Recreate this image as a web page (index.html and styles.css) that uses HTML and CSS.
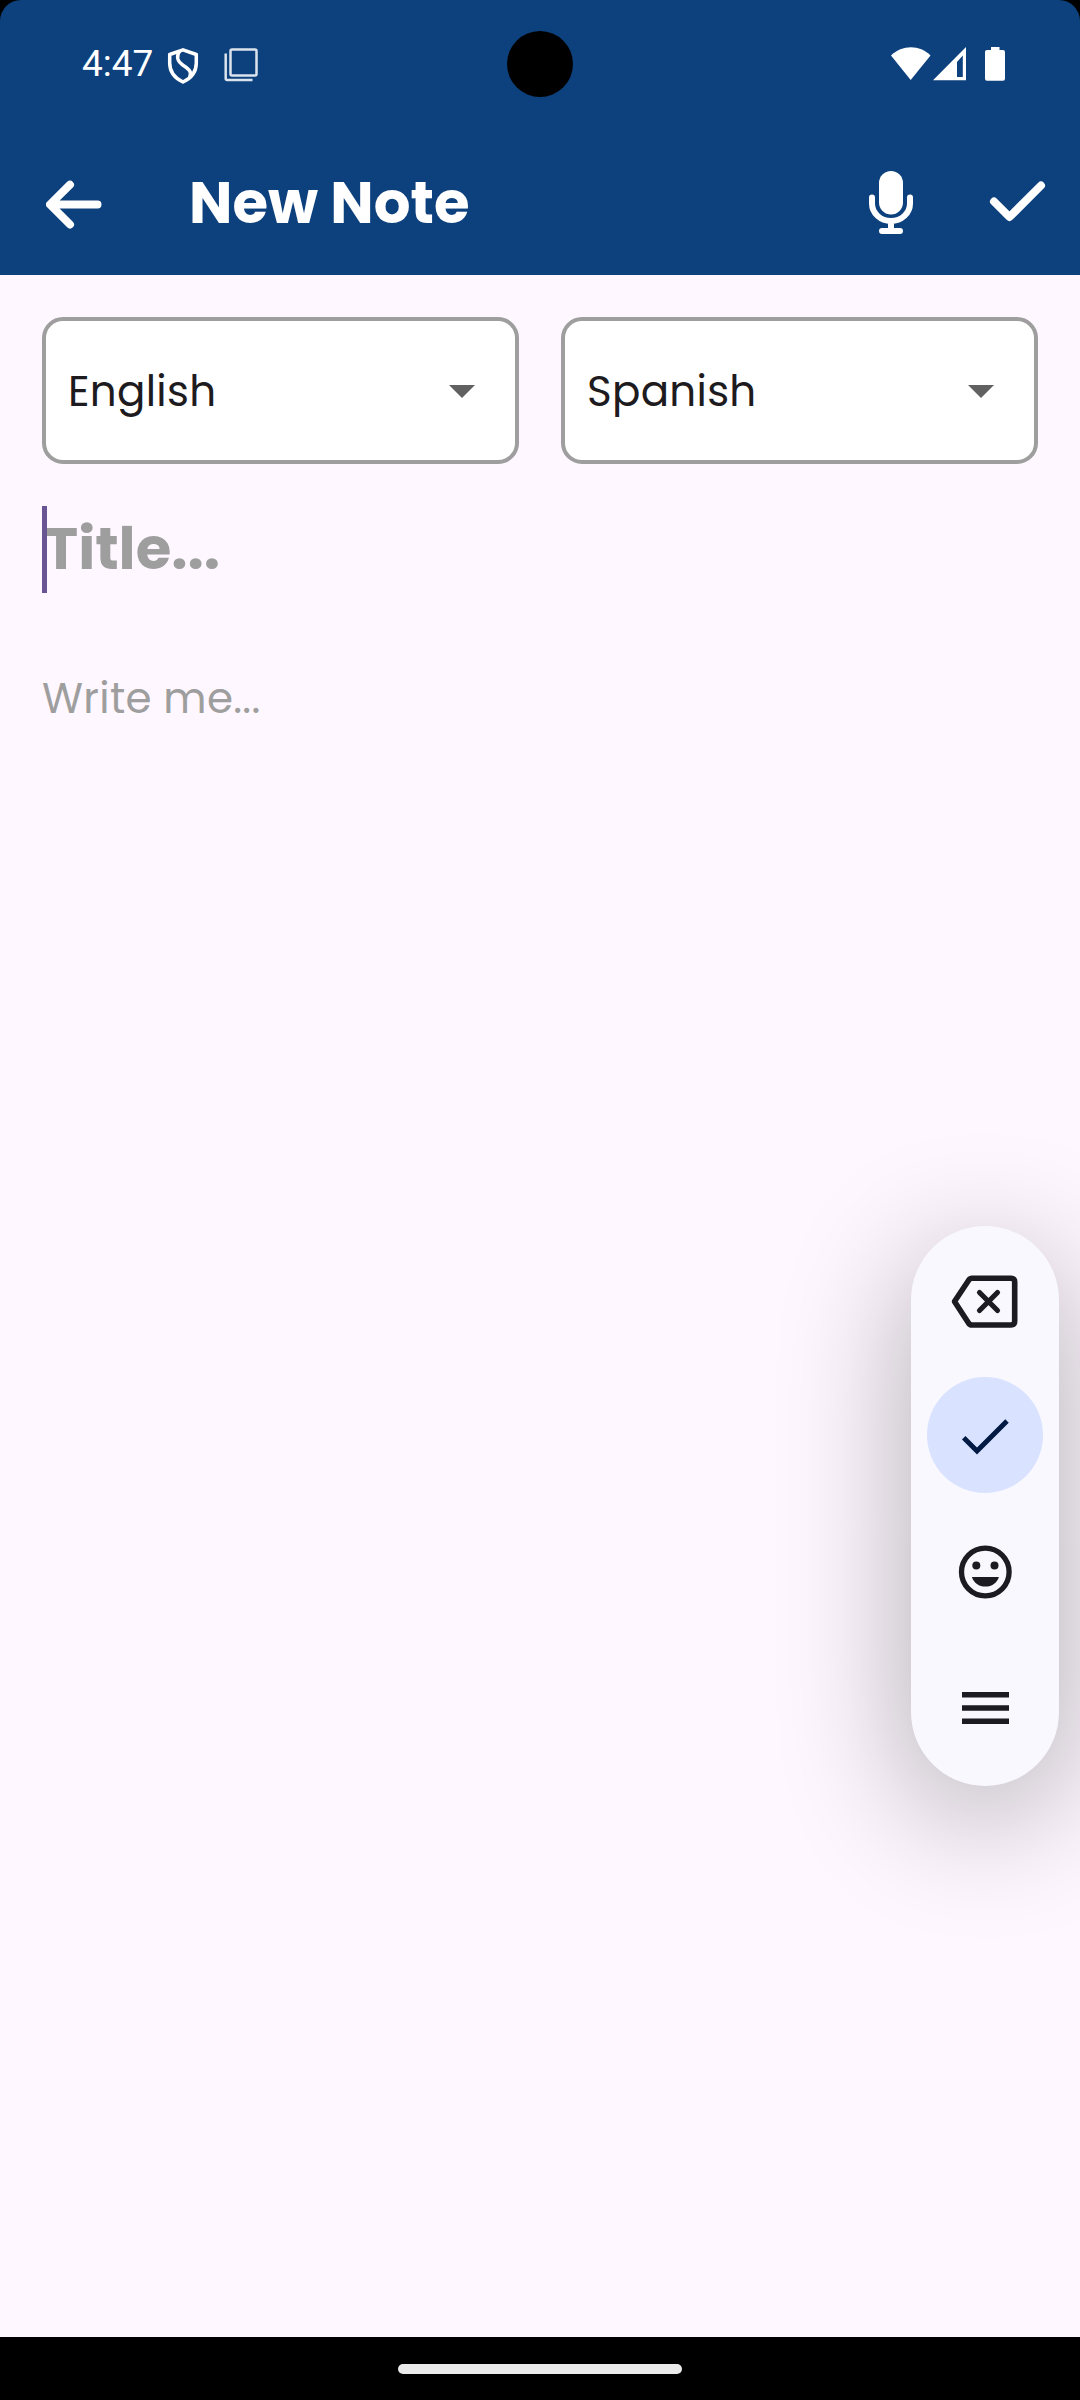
FILE: index.html
```html
<!DOCTYPE html>
<html lang="en">
<head>
<meta charset="utf-8">
<title>New Note</title>
<link rel="stylesheet" href="styles.css">
</head>
<body>
<div class="screen">
  <header class="header">
    <div class="status-bar">
      <span class="clock">4:47</span>
      <svg class="shield" width="32" height="36" viewBox="0 0 32 36" fill="none" stroke="#fff" stroke-width="3.5" stroke-linejoin="round"><path d="M16 1.8 29.3 6.5V15c0 8-4.600 15-13.300 19C7.300 30 2.700 23 2.700 15V6.500z"/><path d="M12.500 3.200C9 9 10 13 16 17.200c7 4.500 9 7 6.500 12"/></svg>
      <svg class="stack" width="34" height="34" viewBox="0 0 34 34" fill="none" stroke="#dbe3ed" stroke-width="2.5"><rect x="6.500" y="1.500" width="26" height="26" rx="1.500"/><path d="M1.700 5.500V30.500Q1.700 32 3.200 32H28.500"/></svg>
      <span class="spacer"></span>
      <svg class="wifi" width="40" height="34" viewBox="0 0 40 34"><path d="M0 8.500C11-2.500 29-2.500 39.500 8.500L19.700 33z" fill="#fff"/></svg>
      <svg class="signal" width="34" height="34" viewBox="0 0 34 34"><path fill-rule="evenodd" d="M0 33.200 33 0V33.200zM24 15V30h5.800V8.500z" fill="#fff"/></svg>
      <svg class="battery" width="20" height="34" viewBox="0 0 20 34"><path d="M6 0h8.500v3H18q2 0 2 2v26.700q0 2-2 2H2q-2 0-2-2V5q0-2 2-2h4z" fill="#fff"/></svg>
      <span class="camera"></span>
    </div>
    <div class="toolbar">
      <svg class="back" width="58" height="50" viewBox="0 0 58 50" fill="none" stroke="#fff" stroke-width="8" stroke-linecap="round" stroke-linejoin="round"><path d="M24 4.700 4 24.500l20 20M4.500 24.500H51.500"/></svg>
      <h1 class="heading">New Note</h1>
      <svg class="mic" width="44" height="64" viewBox="0 0 44 64" fill="none" stroke="#fff" stroke-width="6" stroke-linecap="round"><rect x="10" y="0" width="24" height="43.500" rx="12" fill="#fff" stroke="none"/><path d="M3 26.500v6a19 17.500 0 0 0 38 0v-6M22 52v7M13 60h18"/></svg>
      <svg class="done" width="58" height="42" viewBox="0 0 58 42" fill="none" stroke="#fff" stroke-width="8" stroke-linecap="round" stroke-linejoin="round"><path d="M5 20.500 20.500 36 52 4.500"/></svg>
    </div>
  </header>
  <main class="content">
    <div class="languages">
      <div class="select"><span>English</span><svg width="26" height="13" viewBox="0 0 26 13"><path d="M0 0h26L13 13z" fill="#616161"/></svg></div>
      <div class="select"><span>Spanish</span><svg width="26" height="13" viewBox="0 0 26 13"><path d="M0 0h26L13 13z" fill="#616161"/></svg></div>
    </div>
    <div class="title-field"><span class="title-hint">Title...</span><span class="caret"></span></div>
    <div class="body-field">Write me...</div>
  </main>
  <aside class="keypad">
    <span class="key"><svg class="backspace" width="68" height="54" viewBox="0 0 68 54" fill="none" stroke="#1b1b21" stroke-width="5.600"><path d="M3.500 26.500 17.500 5.500Q18.700 3.300 21 3.300H60Q63.700 3.300 63.700 7V46Q63.700 50 60 50H21Q18.700 50 17.500 48z" stroke-linejoin="round"/><path d="m28.500 17.500 18 18m0-18-18 18" stroke-width="5.200" stroke-linecap="round"/></svg></span>
    <span class="key active"><svg class="enter" width="48" height="36" viewBox="0 0 48 36" fill="none" stroke="#001a43" stroke-width="4.900"><path d="M2.700 18.800 16 32 46 2"/></svg></span>
    <span class="key"><svg class="emoji" width="54" height="54" viewBox="0 0 54 54" fill="#1b1b21"><circle cx="27.300" cy="27" r="23.800" fill="none" stroke="#1b1b21" stroke-width="5.300"/><circle cx="18.300" cy="20.500" r="4"/><circle cx="36.500" cy="20.500" r="4"/><path d="M13.900 32h27c-2 6-7 9.600-13.500 9.600S15.900 38 13.900 32z"/></svg></span>
    <span class="key"><svg class="menu" width="48" height="34" viewBox="0 0 48 34" fill="#1b1b21"><path d="M1 1h47v5.500H1zM1 14.200h47v5.500H1zM1 27.500h47V33H1z"/></svg></span>
  </aside>
  <footer class="nav"><span class="handle"></span></footer>
</div>
</body>
</html>
```

FILE: styles.css
```css
* { box-sizing: border-box; }
body { margin: 0; background: #000; }
svg { display: block; flex: none; }

.screen {
  position: relative;
  display: flex;
  flex-direction: column;
  width: 1080px;
  height: 2400px;
  overflow: hidden;
  background: linear-gradient(#000 0 40px, #fef7ff 40px);
  font-family: Poppins, Inter, "Liberation Sans", sans-serif;
}

.header {
  height: 275px;
  background: #0d417d;
  border-radius: 21px 21px 0 0;
}

.status-bar {
  position: relative;
  display: flex;
  align-items: center;
  height: 128px;
  padding: 0 75px 0 82px;
}
.clock {
  font: 400 37px/40px Roboto, sans-serif;
  color: #fff;
  width: 85px;
}
.shield { margin-top: 3px; }
.stack { margin: 2px 0 0 25px; }
.spacer { flex: 1; }
.signal { margin-left: 2px; }
.battery { margin-left: 18px; }
.camera {
  position: absolute;
  left: 507px;
  top: 31px;
  width: 66px;
  height: 66px;
  border-radius: 50%;
  background: #000;
}

.toolbar {
  display: flex;
  align-items: center;
  height: 147px;
  padding: 0 33px 0 46px;
}
.back { margin-top: 6px; }
.heading {
  flex: 1;
  margin: 2px 0 0 85px;
  font-size: 57.75px;
  line-height: 70px;
  font-weight: 700;
  color: #fff;
  white-space: nowrap;
}
.mic { margin-right: 76px; margin-top: 3px; }

.content { flex: 1; padding: 42px; }
.languages { display: grid; grid-template-columns: 1fr 1fr; gap: 42px; }
.select {
  display: flex;
  align-items: center;
  justify-content: space-between;
  height: 147px;
  padding: 2px 40px 0 22px;
  border: 4px solid #9e9e9e;
  border-radius: 21px;
  background: #fff;
  font-size: 42px;
  line-height: 60px;
  letter-spacing: .3px;
  color: #1d1b20;
}
.title-field {
  position: relative;
  height: 87px;
  margin-top: 42px;
}
.caret {
  position: absolute;
  left: 0;
  top: 0;
  width: 5px;
  height: 87px;
  background: #6a5594;
}
.title-hint {
  display: block;
  margin-left: 2px;
  font-size: 57.75px;
  line-height: 85px;
  font-weight: 700;
  color: #9e9e9e;
}
.body-field {
  margin-top: 76px;
  font-size: 42px;
  line-height: 60px;
  letter-spacing: .3px;
  color: #9e9e9e;
}

.keypad {
  position: absolute;
  left: 911px;
  top: 1226px;
  width: 148px;
  height: 560px;
  padding: 15px 16px;
  border-radius: 74px;
  background: #f9f8ff;
  box-shadow: 0 30px 130px rgba(0, 0, 0, .32);
  display: flex;
  flex-direction: column;
  gap: 20px;
}
.key {
  display: flex;
  align-items: center;
  justify-content: center;
  width: 116px;
  height: 116px;
  border-radius: 50%;
}
.active { background: #d9e2ff; }
.backspace { margin-top: 6px; }
.enter { margin-top: 3px; }
.emoji { margin-top: 2px; }
.menu { margin-top: 2px; }

.nav {
  display: flex;
  justify-content: center;
  height: 63px;
  padding-top: 27px;
  background: #000;
}
.handle { width: 284px; height: 10px; border-radius: 5px; background: #ebebeb; }
```
